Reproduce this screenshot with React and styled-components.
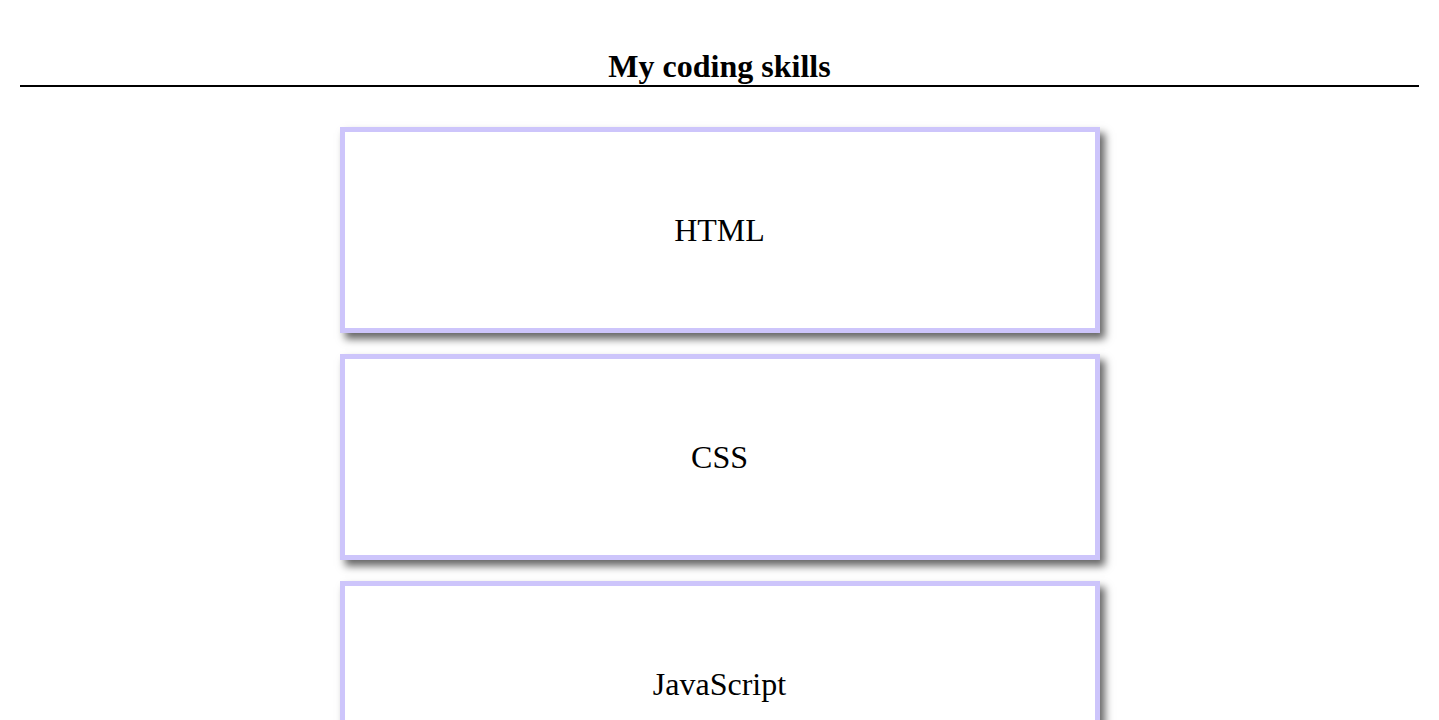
import React from "react";
import styled, { createGlobalStyle } from "styled-components";

const GlobalStyle = createGlobalStyle`
  body {
    margin: 0;
    background: #fff;
    font-family: "Liberation Serif", "Times New Roman", serif;
    color: #000;
  }
`;

const Header = styled.header`
  margin: 0 20px;
  padding-top: 48px;
  border-bottom: 2px solid #000;
`;

const Title = styled.h1`
  margin: 0;
  font-size: 32px;
  line-height: 37px;
  font-weight: bold;
  text-align: center;
`;

const SkillList = styled.ul`
  list-style: none;
  margin: 40px 0 0;
  padding: 0;
  display: flex;
  flex-direction: column;
  align-items: center;
  gap: 21px;
`;

const SkillCard = styled.li`
  box-sizing: border-box;
  width: 760px;
  height: 206px;
  border: 5px solid #cdc5fb;
  box-shadow: 5px 6px 8px #666;
  display: flex;
  align-items: center;
  justify-content: center;
  font-size: 32px;
`;

const skills = ["HTML", "CSS", "JavaScript"];

export default function App() {
  return (
    <>
      <GlobalStyle />
      <Header>
        <Title>My coding skills</Title>
      </Header>
      <SkillList>
        {skills.map((skill) => (
          <SkillCard key={skill}>{skill}</SkillCard>
        ))}
      </SkillList>
    </>
  );
}
